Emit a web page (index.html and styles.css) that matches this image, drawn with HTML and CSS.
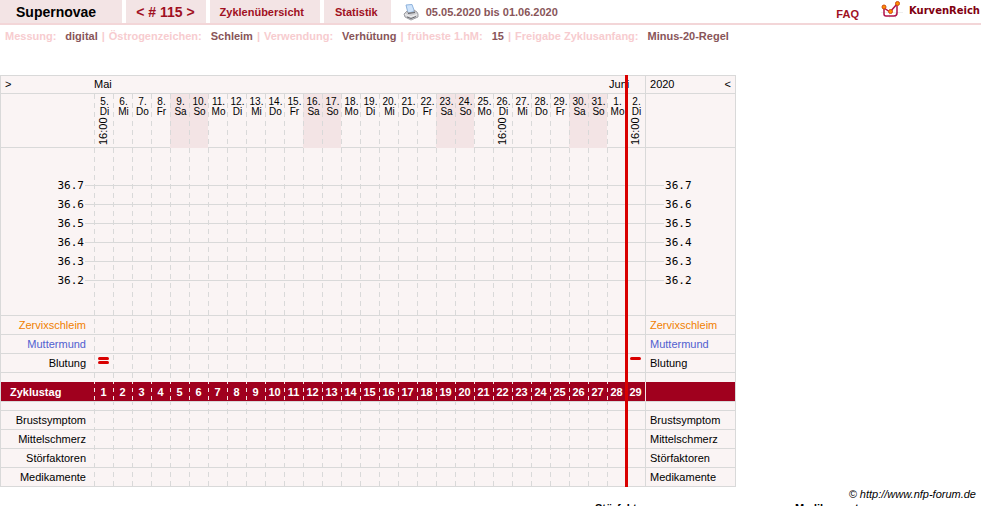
FILE: index.html
```html
<!DOCTYPE html>
<html lang="de">
<head>
  <meta charset="UTF-8">
  <title>Supernovae - Zyklus 115</title>
  <link rel="stylesheet" href="styles.css">
</head>
<body>
  <header class="kopf">
    <nav class="tabs">
      <span class="tab name">Supernovae</span>
      <span class="tab nummer"><a href="#zurueck">&lt;</a> <a href="#zyklus"># 115</a> <a href="#weiter">&gt;</a></span>
      <a class="tab uebersicht" href="#uebersicht">Zyklenübersicht</a>
      <a class="tab statistik" href="#statistik">Statistik</a>
    </nav>
    <a class="drucken" href="#drucken" aria-label="Drucken">
      <svg width="16" height="17" viewBox="0 0 16 17">
        <path d="M3 1l6-.5 2.500 7L5 9z" fill="#cfe4fb" stroke="#8db2dc"/>
        <path d="M1 10l3-3 1 2 7-1-1-2 3 2 1 2v3l-7 3-6-3z" fill="#cfcfd2" stroke="#a0a1a6"/>
        <path d="M2 10.500l6 2 6-2" fill="none" stroke="#f4f4f4"/>
        <path d="M4 13l4 1.500 5-2" fill="none" stroke="#6a6b70"/>
        <path d="M5 9.500l7-1" stroke="#66676d"/>
      </svg>
    </a>
    <span class="zeitraum">05.05.2020 bis 01.06.2020</span>
    <a class="faq" href="#faq">FAQ</a>
    <a class="logo" href="#kurvenreich">
      <svg width="22" height="18" viewBox="0 0 22 18">
        <path d="M0 12.500h22M8.500 12v6M14.500 12v6" fill="none" stroke="#eee"/>
        <path d="M3 7v7q0 2 2 2h8q3 0 3-3V4" fill="none" stroke="#b0104a" stroke-width="1.500"/>
        <path d="M3 8l6 4 7-8" fill="none" stroke="#b0104a" stroke-width="1.500"/>
        <circle cx="3" cy="7" r="2" fill="#ff9000" stroke="#d04a10"/>
        <circle cx="9.500" cy="11.500" r="2" fill="#ff9000" stroke="#d04a10"/>
        <circle cx="16.500" cy="3.500" r="2" fill="#ff9000" stroke="#d04a10"/>
      </svg>
      <span>KurvenReich</span>
    </a>
  </header>

  <dl class="angaben">
    <div><dt>Messung:</dt><dd>digital</dd></div>
    <div><dt>Östrogenzeichen:</dt><dd>Schleim</dd></div>
    <div><dt>Verwendung:</dt><dd>Verhütung</dd></div>
    <div><dt>früheste 1.hM:</dt><dd>15</dd></div>
    <div><dt>Freigabe Zyklusanfang:</dt><dd>Minus-20-Regel</dd></div>
  </dl>

  <div class="blatt">
    <table class="kurve">
      <colgroup><col class="spalte-links"></colgroup>
      <colgroup id="spalten"></colgroup>
      <colgroup><col class="spalte-rechts"></colgroup>
      <tbody id="zeilen">
        <tr class="monate">
          <th class="links"><a href="#frueher">&gt;</a></th>
          <th colspan="27">Mai</th>
          <th colspan="2" class="juni">Juni</th>
          <th class="rechts"><div class="jahr"><span>2020</span><a href="#spaeter">&lt;</a></div></th>
        </tr>
      </tbody>
    </table>
    <div class="zyklusende"></div>
  </div>

  <p class="copyright">© <a href="#forum">http://www.nfp-forum.de</a></p>
  <div class="legende">
    <h2>Störfaktoren</h2>
    <h2>Medikamente</h2>
  </div>

  <script src="kurve.js"></script>
</body>
</html>
```
FILE: styles.css
```css
body {
  margin: 0;
  font-family: "Liberation Sans", Arial, sans-serif;
  font-size: 11px;
  background-color: #fff;
  color: #000;
  overflow: hidden;
}

a {
  color: inherit;
  text-decoration: none;
}

/* Kopfzeile */
.kopf {
  display: flex;
  height: 23px;
  border-bottom: 2px solid #f3d6d8;
  font-weight: bold;
  color: #a01022;
}

.tabs {
  display: flex;
  gap: 4px;
}

.tab {
  background-color: #f3e4e5;
  line-height: 25px;
  height: 23px;
}

.name {
  padding: 0 26px 0 16px;
  font-size: 14px;
  color: #000;
}

.nummer {
  padding: 0 11px 0 10px;
  font-size: 14px;
}

.uebersicht {
  padding: 0 16px 0 10px;
}

.statistik {
  padding: 0 13px 0 11px;
}

.drucken {
  margin: 4px 7px 0 12px;
}

.zeitraum {
  line-height: 25px;
  color: #885559;
}

.faq {
  margin-left: auto;
  line-height: 28px;
}

.logo {
  display: flex;
  gap: 6px;
  margin-left: 22px;
  padding-right: 1px;
  font-family: "DejaVu Sans", Verdana, sans-serif;
  font-size: 10px;
  line-height: 21px;
  color: #800010;
}

/* Angaben zum Zyklus */
.angaben {
  display: flex;
  margin: 0;
  padding: 5px;
  line-height: 13px;
  font-weight: bold;
}

.angaben div {
  display: flex;
}

.angaben div + div::before {
  content: "|";
  margin: 0 4px;
  color: #f7cccf;
}

.angaben dt {
  color: #f7cccf;
}

.angaben dd {
  margin-left: 9px;
  color: #885559;
}

/* Kurvenblatt */
.blatt {
  position: relative;
  width: 736px;
  margin-top: 27px;
}

.kurve {
  width: 100%;
  table-layout: fixed;
  border-spacing: 0;
  border: 1px solid #d9d9d9;
  border-bottom: none;
  background-color: #faf4f4;
}

.kurve th,
.kurve td {
  padding: 0;
  height: 18px;
  line-height: 18px;
  font-weight: normal;
  text-align: left;
  white-space: nowrap;
  border-bottom: 1px solid #d9d9d9;
}

.spalte-links {
  width: 93px;
}

.spalte-tag {
  width: 19px;
  background: linear-gradient(#d9d9d9 5px, transparent 5px) 0 0 / 1px 9px repeat-y;
}

.spalte-letzte {
  width: 19px;
}

.spalte-rechts {
  width: 90px;
}

.kurve .rechts {
  padding-left: 4px;
  border-left: 1px solid #d9d9d9;
}

.kurve .links {
  padding-right: 8px;
  text-align: right;
}

.kurve .tag {
  text-align: center;
}

.kurve .monate th {
  height: 17px;
  line-height: 17px;
  background-color: #faf4f4;
}

.kurve .monate .links {
  padding-left: 4px;
  text-align: left;
}

.kurve .monate .juni {
  padding-left: 2px;
}

.jahr {
  display: flex;
  justify-content: space-between;
  padding-right: 4px;
}

.kurve .tage .tag {
  height: 53px;
  vertical-align: top;
  font-size: 10px;
  line-height: 10px;
}

.kurve .tage .we {
  background: linear-gradient(#d9d9d9 5px, transparent 5px) 0 0 / 1px 9px repeat-y #f3e4e5;
  border-bottom-color: #f3e4e5;
}

.tage span {
  display: block;
  padding: 3px 0 0 2px;
}

.tage time {
  display: block;
  height: 28px;
  writing-mode: vertical-rl;
  transform: rotate(180deg);
  font-size: 11px;
  line-height: 19px;
}

.kurve .frei-oben td {
  height: 28px;
  border-bottom: none;
}

.kurve .frei-unten td {
  height: 25px;
}

.kurve .skala th,
.kurve .skala td {
  height: 19px;
  border-bottom: none;
  font-family: "DejaVu Sans Mono", monospace;
}

.kurve .skala .tag {
  background: linear-gradient(#d9d9d9, #d9d9d9) 0 9px / 100% 1px no-repeat;
}

.kurve .skala .links {
  background: linear-gradient(#d9d9d9, #d9d9d9) right 9px / 9px 1px no-repeat;
  padding-right: 10px;
}

.kurve .skala .rechts {
  background: linear-gradient(#d9d9d9, #d9d9d9) 0 9px / 18px 1px no-repeat;
  padding-left: 19px;
}

.kurve .zervix {
  color: #f08000;
}

.kurve .muttermund {
  color: #5060d0;
}

.blutung svg {
  display: block;
  margin: 0 auto 5px 4px;
}

.kurve .abstand-oben td {
  height: 9px;
  border-bottom: none;
}

.kurve .abstand-unten td {
  height: 8px;
}

.kurve .zyklustag th,
.kurve .zyklustag td {
  height: 19px;
  background-color: #a0001e;
  color: #fff;
  font-weight: bold;
}

.kurve .zyklustag .links {
  padding-left: 9px;
  text-align: left;
}

.kurve .zyklustag .tag {
  background: linear-gradient(#f3e4e5 4px, transparent 4px) 0 -2px / 1px 8px repeat-y #a0001e;
}

.kurve .zyklustag .rechts {
  border-left-color: #f3e4e5;
}

/* liegt ueber der Grenze zum naechsten Zyklus */
.zyklusende {
  position: absolute;
  top: 0;
  bottom: 0;
  right: 108px;
  width: 3px;
  background-color: #d90000;
}

/* Fuss */
.copyright {
  margin: 1px 5px 0;
  line-height: 13px;
  text-align: right;
  font-style: italic;
}

.legende {
  display: grid;
  grid-template-columns: 200px 186px;
  justify-content: end;
}

.legende h2 {
  margin: 0;
  font-size: 11px;
  line-height: 15px;
}
```
FILE: kurve.js
```js
var TAGE = 29;
var wochentage = ["Mo", "Di", "Mi", "Do", "Fr", "Sa", "So"];
var zeilen = document.getElementById("zeilen");
var strich = '<rect x="0" y="Y" width="11" height="3" rx="1.5" fill="#d90000"/>';

// eine Zeile: Beschriftung links, ein Feld pro Tag, Beschriftung rechts
function zeile(klasse, links, rechts, feld) {
  var html = '<tr class="' + klasse + '">';
  html += links ? '<th class="links">' + links + "</th>" : "<td></td>";
  for (var i = 0; i < TAGE; i++) {
    html += feld ? feld(i) : '<td class="tag"></td>';
  }
  html += '<td class="rechts">' + rechts + "</td></tr>";
  zeilen.insertAdjacentHTML("beforeend", html);
}

var spalten = "";
for (var i = 0; i < TAGE; i++) {
  spalten += '<col class="' + (i < TAGE - 1 ? "spalte-tag" : "spalte-letzte") + '">';
}
document.getElementById("spalten").innerHTML = spalten;

// 5. Mai 2020 war ein Dienstag
zeile("tage", "", "", function (i) {
  var datum = i + 5 > 31 ? i + 5 - 31 : i + 5;
  var w = (i + 1) % 7;
  var uhrzeit = i == 0 || i == 21 || i == 28 ? "<time>16:00</time>" : "";
  return '<th class="tag' + (w > 4 ? " we" : "") + '"><span>' + datum + ".<br>" + wochentage[w] + "</span>" + uhrzeit + "</th>";
});

zeile("frei-oben", "", "");
["36.7", "36.6", "36.5", "36.4", "36.3", "36.2"].forEach(function (t) {
  zeile("skala", t, t);
});
zeile("frei-unten", "", "");

zeile("zervix", "Zervixschleim", "Zervixschleim");
zeile("muttermund", "Muttermund", "Muttermund");
zeile("blutung", "Blutung", "Blutung", function (i) {
  var striche = "";
  if (i == 0) striche = strich.replace("Y", 0) + strich.replace("Y", 4);
  if (i == 28) striche = strich.replace("Y", 0);
  return '<td class="tag">' + (striche ? '<svg width="11" height="7">' + striche + "</svg>" : "") + "</td>";
});

zeile("abstand-oben", "", "");
zeile("zyklustag", "Zyklustag", "", function (i) {
  return '<td class="tag">' + (i + 1) + "</td>";
});
zeile("abstand-unten", "", "");

["Brustsymptom", "Mittelschmerz", "Störfaktoren", "Medikamente"].forEach(function (name) {
  zeile("", name, name);
});
```
